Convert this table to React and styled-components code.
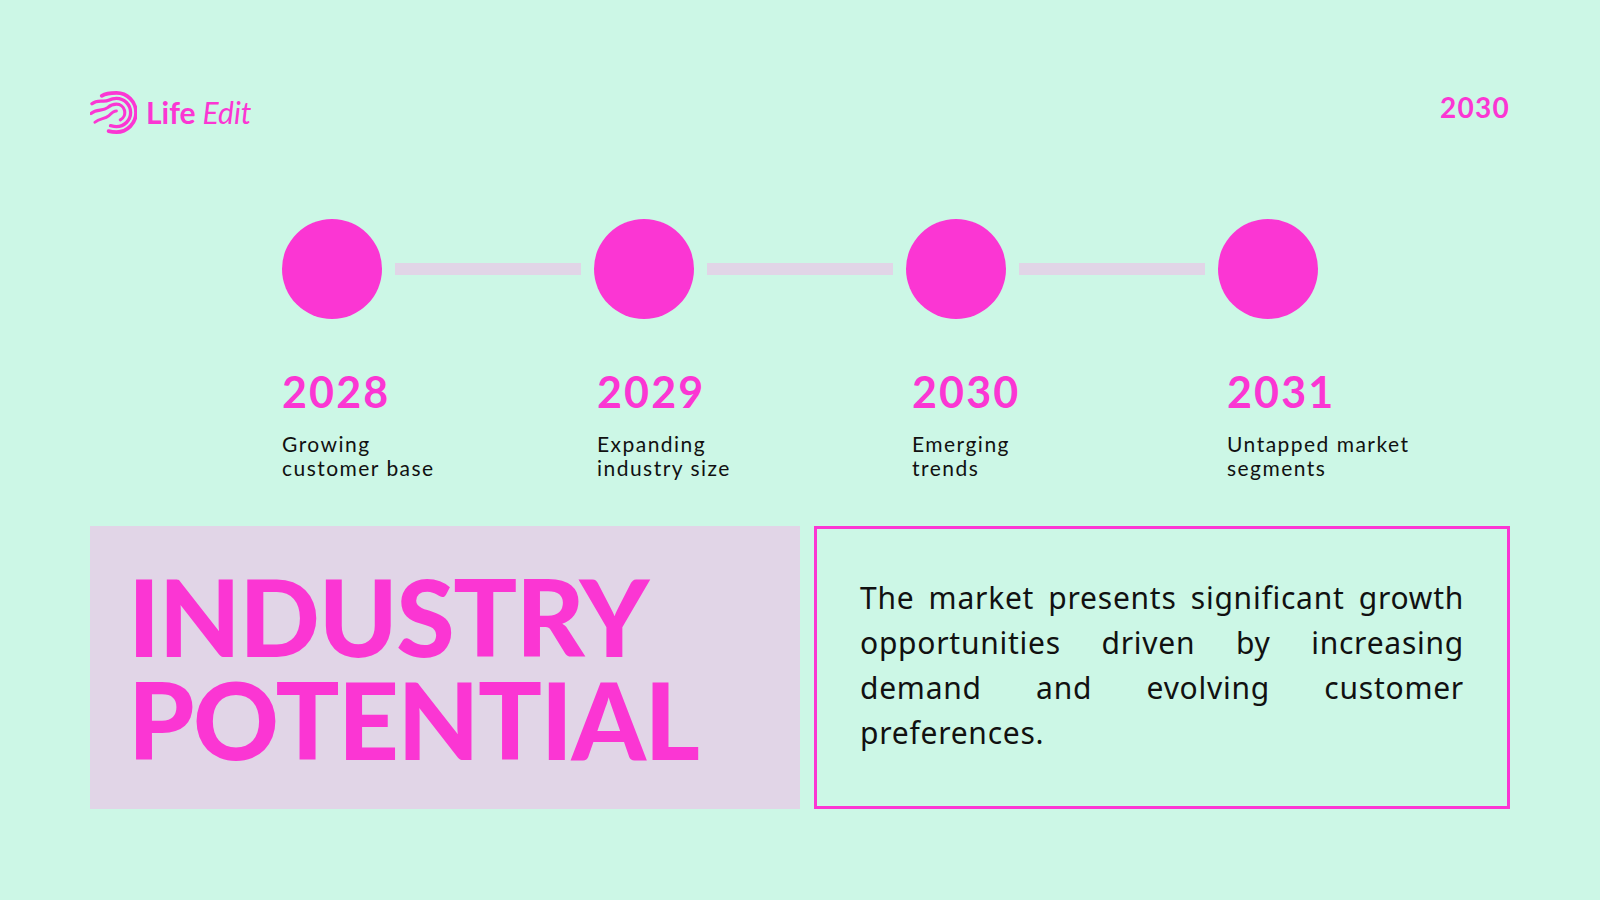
import React from "react";
import styled, { createGlobalStyle } from "styled-components";

const PINK = "#fb36d3";
const MINT = "#ccf7e6";
const LILAC = "#e1d5e7";

const Global = createGlobalStyle`
  html, body { margin: 0; padding: 0; background: ${MINT}; }
  * { box-sizing: border-box; }
`;

const Page = styled.div`
  width: 1600px;
  height: 900px;
  background: ${MINT};
  padding: 90px 90px 0 90px;
  font-family: Lato, "Liberation Sans", sans-serif;
  overflow: hidden;
`;

const Header = styled.header`
  display: flex;
  justify-content: space-between;
  align-items: flex-start;
  height: 44px;
`;

const Logo = styled.div`
  display: flex;
  align-items: center;
  gap: 9px;
  height: 44px;
`;

const LogoText = styled.div`
  font-size: 30px;
  line-height: 1.2;
  color: ${PINK};
  white-space: nowrap;
  b { font-weight: 700; }
  i { font-weight: 400; font-style: italic; margin-left: 7px; }
`;

const HeaderYear = styled.div`
  font-size: 28px;
  line-height: 1.2;
  font-weight: 700;
  color: ${PINK};
  letter-spacing: 0.045em;
  margin-top: 1px;
`;

const Timeline = styled.div`
  margin-top: 85px;
  display: flex;
  justify-content: center;
  align-items: center;
  height: 100px;
`;

const Dot = styled.div`
  width: 100px;
  height: 100px;
  border-radius: 50%;
  background: ${PINK};
  flex: none;
`;

const Connector = styled.div`
  width: 186px;
  height: 12px;
  margin: 0 13px;
  background: ${LILAC};
  flex: none;
`;

const Steps = styled.div`
  display: grid;
  grid-template-columns: repeat(4, 315px);
  margin-top: 47px;
  padding-left: 192px;
`;

const Step = styled.div`
  display: flex;
  flex-direction: column;
`;

const Year = styled.div`
  font-size: 43px;
  line-height: 1.2;
  font-weight: 700;
  color: ${PINK};
  letter-spacing: 0.05em;
`;

const Desc = styled.div`
  margin-top: 14px;
  font-size: 21px;
  line-height: 24.5px;
  color: #111;
  letter-spacing: 0.07em;
`;

const Bottomwrap = styled.div`
  margin-top: 45px;
`;

const Bottom = styled.div`
  display: grid;
  grid-template-columns: 710px 696px;
  gap: 14px;
  height: 283px;
`;

const TitleBox = styled.div`
  background: ${LILAC};
  padding: 39px 0 0 38px;
`;

const Title = styled.h1`
  margin: 0;
  font-family: Lato, sans-serif;
  font-weight: 900;
  font-size: 106px;
  line-height: 103px;
  color: ${PINK};
  letter-spacing: -0.013em;
`;

const TextBox = styled.div`
  border: 3px solid ${PINK};
  padding: 46px 43px 0 43px;
`;

const Para = styled.p`
  margin: 0;
  font-family: "Noto Sans", "Open Sans", sans-serif;
  font-size: 30px;
  line-height: 45px;
  color: #111;
  text-align: justify;
  letter-spacing: 0.025em;
`;

const LogoMark = () => (
  <svg width="47" height="45" viewBox="0 0 48 46" fill="none" stroke={PINK} strokeLinecap="round">
    <path d="M12 6 C 16 3.5, 22 3, 27 3 A 20 20 0 0 1 27 43 C 24 43, 21 42.5, 19 42" strokeWidth="3.8" />
    <path d="M2 14 C 8 9, 14 13, 19 10.5 C 21.5 9.2, 24 8.5, 27 8.5 A 14.5 14.5 0 0 1 27 37.5 C 25 37.5, 23 37, 21 36.5" strokeWidth="3.4" />
    <path d="M1 24 C 7 19, 13 22, 18 18 C 21 15.5, 24 14.5, 27 14.5 A 8.5 8.5 0 0 1 31 30.5" strokeWidth="3.2" />
    <path d="M5 33 C 10 28.5, 15 30, 19 26.5 C 21.5 24, 24 21.5, 27 21.5" strokeWidth="3" />
  </svg>
);

const steps = [
  { year: "2028", text: ["Growing", "customer base"] },
  { year: "2029", text: ["Expanding", "industry size"] },
  { year: "2030", text: ["Emerging", "trends"] },
  { year: "2031", text: ["Untapped market", "segments"] },
];

export default function App() {
  return (
    <>
      <Global />
      <Page>
        <Header>
          <Logo>
            <LogoMark />
            <LogoText>
              <b>Life</b>
              <i>Edit</i>
            </LogoText>
          </Logo>
          <HeaderYear>2030</HeaderYear>
        </Header>

        <Timeline>
          {steps.map((s, i) => (
            <React.Fragment key={s.year}>
              {i > 0 && <Connector />}
              <Dot />
            </React.Fragment>
          ))}
        </Timeline>

        <Steps>
          {steps.map((s) => (
            <Step key={s.year}>
              <Year>{s.year}</Year>
              <Desc>
                {s.text[0]}
                <br />
                {s.text[1]}
              </Desc>
            </Step>
          ))}
        </Steps>

        <Bottomwrap>
          <Bottom>
            <TitleBox>
              <Title>
                INDUSTRY
                <br />
                POTENTIAL
              </Title>
            </TitleBox>
            <TextBox>
              <Para>
                The market presents significant growth opportunities driven by
                increasing demand and evolving customer preferences.
              </Para>
            </TextBox>
          </Bottom>
        </Bottomwrap>
      </Page>
    </>
  );
}
